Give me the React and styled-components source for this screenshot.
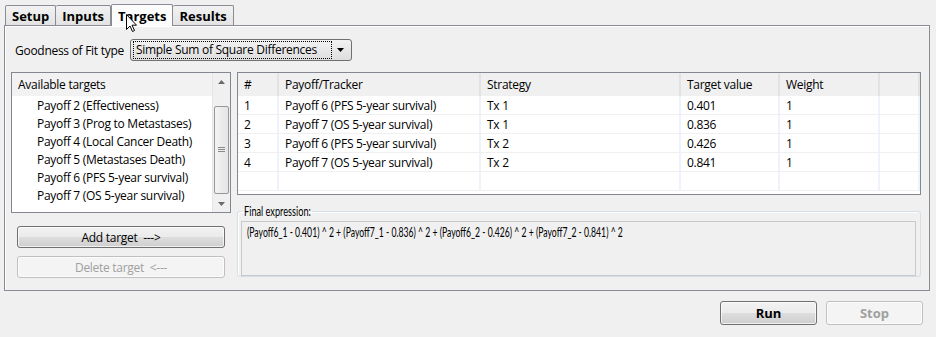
import React from 'react';
import styled, { createGlobalStyle } from 'styled-components';

const GlobalStyle = createGlobalStyle`
  body {
    margin: 0;
    background: #f0f0f0;
    font-family: "Open Sans", "Noto Sans", sans-serif;
    font-size: 12px;
    letter-spacing: -0.28px;
    color: #000;
  }
`;

const Window = styled.div`
  width: 936px;
  height: 337px;
  background: #f0f0f0;
  position: relative;
  overflow: hidden;
`;

const TabBar = styled.div`
  display: flex;
  align-items: flex-end;
  height: 25px;
  padding-left: 5px;
`;

const Tab = styled.div`
  position: relative;
  font-weight: bold;
  font-size: 13px;
  letter-spacing: 0;
  height: ${(p) => (p.$active ? '21px' : '19px')};
  line-height: ${(p) => (p.$active ? '22px' : '20px')};
  padding: 0 6px;
  margin-bottom: ${(p) => (p.$active ? '-1px' : '0')};
  border: 1px solid #898c95;
  border-bottom: none;
  border-left: ${(p) => (p.$first || p.$active ? '1px solid #898c95' : 'none')};
  border-radius: 2px 2px 0 0;
  background: ${(p) => (p.$active ? '#fcfcfc' : 'linear-gradient(#f2f2f2, #e3e3e3)')};
  z-index: ${(p) => (p.$active ? 2 : 1)};
`;

const Panel = styled.div`
  margin: 0 6px 0 4px;
  height: 266px;
  border: 1px solid #898c95;
  background: #f0f0f0;
  box-shadow: inset 1px 1px 0 #ffffff;
  box-sizing: border-box;
  padding: 13px 0 0 6px;
`;

const FitRow = styled.div`
  display: flex;
  align-items: center;
  gap: 6px;
  padding-left: 4px;
  height: 22px;
`;

const Combo = styled.div`
  display: flex;
  align-items: center;
  width: 222px;
  height: 22px;
  box-sizing: border-box;
  border: 1px solid #707070;
  border-radius: 3px;
  background: linear-gradient(#f2f2f2, #dedede);
  padding: 2px;
`;

const ComboText = styled.div`
  flex: 1;
  height: 16px;
  line-height: 15px;
  border: 1px dotted #000;
  padding-left: 2px;
  white-space: nowrap;
`;

const ComboArrow = styled.div`
  width: 17px;
  display: flex;
  justify-content: center;
`;

const Main = styled.div`
  display: flex;
  gap: 6px;
  margin-top: 11px;
`;

const LeftCol = styled.div`
  width: 220px;
  display: flex;
  flex-direction: column;
`;

const ListBox = styled.div`
  height: 141px;
  box-sizing: border-box;
  border: 1px solid #828790;
  background: #fff;
  display: flex;
`;

const ListBody = styled.div`
  flex: 1;
`;

const ListHeader = styled.div`
  height: 23px;
  line-height: 23px;
  background: #f2f2f2;
  padding-left: 6px;
`;

const ListItem = styled.div`
  height: 18px;
  line-height: 19px;
  padding-left: 25px;
  white-space: nowrap;
`;

const ScrollBar = styled.div`
  width: 17px;
  background: #f0f0f0;
  border-left: 1px solid #e6e6e6;
  display: flex;
  flex-direction: column;
  align-items: center;
`;

const ScrollArrow = styled.div`
  height: 17px;
  display: flex;
  align-items: center;
  justify-content: center;
`;

const ScrollTrack = styled.div`
  flex: 1;
  width: 100%;
  padding: 0 1px;
  box-sizing: border-box;
`;

const Thumb = styled.div`
  margin-top: ${(p) => p.$top}px;
  height: ${(p) => p.$height}px;
  border: 1px solid #979797;
  border-radius: 2px;
  background: linear-gradient(90deg, #f4f4f4, #e4e4e4);
  display: flex;
  align-items: center;
  justify-content: center;
`;

const Button = styled.div`
  margin: ${(p) => p.$margin || '0'};
  height: ${(p) => p.$height || 22}px;
  width: ${(p) => (p.$width ? `${p.$width}px` : 'auto')};
  box-sizing: border-box;
  border: 1px solid ${(p) => (p.$disabled ? '#c0c0c0' : '#707070')};
  border-radius: 3px;
  background: ${(p) =>
    p.$disabled ? '#f4f4f4' : 'linear-gradient(#f2f2f2 0%, #ebebeb 50%, #dddddd 51%, #cfcfcf 100%)'};
  color: ${(p) => (p.$disabled ? '#a0a0a0' : '#000')};
  font-weight: ${(p) => (p.$bold ? 'bold' : 'normal')};
  font-size: ${(p) => (p.$bold ? '13px' : '12px')};
  letter-spacing: ${(p) => (p.$bold ? '0' : '-0.28px')};
  display: flex;
  align-items: center;
  justify-content: center;
  box-shadow: inset 0 0 0 1px rgba(255, 255, 255, 0.7);
  white-space: pre;
`;

const RightCol = styled.div`
  width: 684px;
  display: flex;
  flex-direction: column;
`;

const Table = styled.div`
  height: 123px;
  box-sizing: border-box;
  border: 1px solid #828790;
  background: #fff;
`;

const Row = styled.div`
  display: grid;
  grid-template-columns: 41px 202px 200px 99px 100px 1fr;
  height: ${(p) => (p.$header ? 23 : 19)}px;
  background: ${(p) => (p.$header ? '#f0f0f0' : '#fff')};
  border-bottom: ${(p) => (p.$header ? 'none' : '1px solid #f0f0f0')};
  box-sizing: border-box;
`;

const Cell = styled.div`
  padding-left: 6px;
  line-height: ${(p) => (p.$header ? 23 : 19)}px;
  border-right: 2px solid ${(p) => (p.$header ? '#e2e2e2' : '#eef2fa')};
  white-space: nowrap;
  overflow: hidden;
`;

const Group = styled.fieldset`
  margin: 8px 0 0 0;
  padding: 2px 4px 7px 3px;
  height: 74px;
  box-sizing: border-box;
  border: 1px solid #d5dfe5;
  border-radius: 3px;
  box-shadow: inset 1px 1px 0 #fff;
`;

const Legend = styled.legend`
  width: 66px;
  padding: 0 2px;
  margin-left: 1px;
  font-family: "Lato", sans-serif;
  font-size: 13.5px;
  letter-spacing: 0;
  white-space: nowrap;
  color: #000;
`;

const Squeezed = styled.span`
  display: inline-block;
  transform: scaleX(${(p) => p.$scale});
  transform-origin: left center;
  white-space: nowrap;
`;

const ExprBox = styled.div`
  height: 55px;
  box-sizing: border-box;
  border: 1px solid #c9c9c9;
  background: #f0f0f0;
  padding: 2px 5px;
  font-family: "Lato", sans-serif;
  font-size: 13.5px;
  letter-spacing: 0;
  white-space: nowrap;
  overflow: hidden;
`;

const Footer = styled.div`
  display: flex;
  justify-content: flex-end;
  gap: 9px;
  padding: 10px 13px 0 0;
`;

const Cursor = styled.svg`
  position: absolute;
  left: 126px;
  top: 14px;
  z-index: 10;
`;

const items = [
  'Payoff 2 (Effectiveness)',
  'Payoff 3 (Prog to Metastases)',
  'Payoff 4 (Local Cancer Death)',
  'Payoff 5 (Metastases Death)',
  'Payoff 6 (PFS 5-year survival)',
  'Payoff 7 (OS 5-year survival)',
];

const rows = [
  ['1', 'Payoff 6 (PFS 5-year survival)', 'Tx 1', '0.401', '1'],
  ['2', 'Payoff 7 (OS 5-year survival)', 'Tx 1', '0.836', '1'],
  ['3', 'Payoff 6 (PFS 5-year survival)', 'Tx 2', '0.426', '1'],
  ['4', 'Payoff 7 (OS 5-year survival)', 'Tx 2', '0.841', '1'],
  ['', '', '', '', ''],
];

const Tri = ({ up }) => (
  <svg width="7" height="4" viewBox="0 0 7 4">
    <path d={up ? 'M0 4 L3.5 0 L7 4 Z' : 'M0 0 L7 0 L3.5 4 Z'} fill="#6a6a6a" />
  </svg>
);

const App = () => {
  return (
    <Window>
      <GlobalStyle />
      <TabBar>
        <Tab $first>Setup</Tab>
        <Tab>Inputs</Tab>
        <Tab $active>Targets</Tab>
        <Tab>Results</Tab>
      </TabBar>
      <Panel>
        <FitRow>
          <span>Goodness of Fit type</span>
          <Combo>
            <ComboText>Simple Sum of Square Differences</ComboText>
            <ComboArrow>
              <svg width="7" height="4" viewBox="0 0 7 4">
                <path d="M0 0 L7 0 L3.5 4 Z" fill="#000" />
              </svg>
            </ComboArrow>
          </Combo>
        </FitRow>
        <Main>
          <LeftCol>
            <ListBox>
              <ListBody>
                <ListHeader>Available targets</ListHeader>
                {items.map((t) => (
                  <ListItem key={t}>{t}</ListItem>
                ))}
              </ListBody>
              <ScrollBar>
                <ScrollArrow>
                  <Tri up />
                </ScrollArrow>
                <ScrollTrack>
                  <Thumb $top={16} $height={86}>
                    <svg width="7" height="6" viewBox="0 0 7 6">
                      <path d="M0 0.5 H7 M0 2.5 H7 M0 4.5 H7" stroke="#8a8a8a" strokeWidth="1" />
                    </svg>
                  </Thumb>
                </ScrollTrack>
                <ScrollArrow>
                  <Tri />
                </ScrollArrow>
              </ScrollBar>
            </ListBox>
            <Button $margin="13px 6px 0 6px">{'Add target  --->'}</Button>
            <Button $margin="8px 6px 0 6px" $disabled>{'Delete target  <---'}</Button>
          </LeftCol>
          <RightCol>
            <Table>
              <Row $header>
                {['#', 'Payoff/Tracker', 'Strategy', 'Target value', 'Weight', ''].map((h, i) => (
                  <Cell $header key={i}>{h}</Cell>
                ))}
              </Row>
              {rows.map((r, i) => (
                <Row key={i}>
                  {[...r, ''].map((c, j) => (
                    <Cell key={j}>{c}</Cell>
                  ))}
                </Row>
              ))}
            </Table>
            <Group>
              <Legend>
                <Squeezed $scale={0.68}>Final expression:</Squeezed>
              </Legend>
              <ExprBox>
                <Squeezed $scale={0.64}>
                  (Payoff6_1 - 0.401) ^ 2 + (Payoff7_1 - 0.836) ^ 2 + (Payoff6_2 - 0.426) ^ 2 + (Payoff7_2 - 0.841) ^ 2
                </Squeezed>
              </ExprBox>
            </Group>
          </RightCol>
        </Main>
      </Panel>
      <Footer>
        <Button $bold $width={97} $height={24}>Run</Button>
        <Button $bold $width={97} $height={24} $disabled>Stop</Button>
      </Footer>
      <Cursor width="12" height="19" viewBox="0 0 12 19">
        <path d="M0.5 0.5 L0.5 15.5 L4 12 L6.5 17.5 L8.5 16.5 L6 11.2 L10.5 11.2 Z" fill="#fff" stroke="#000" strokeWidth="1" />
      </Cursor>
    </Window>
  );
};

export default App;
